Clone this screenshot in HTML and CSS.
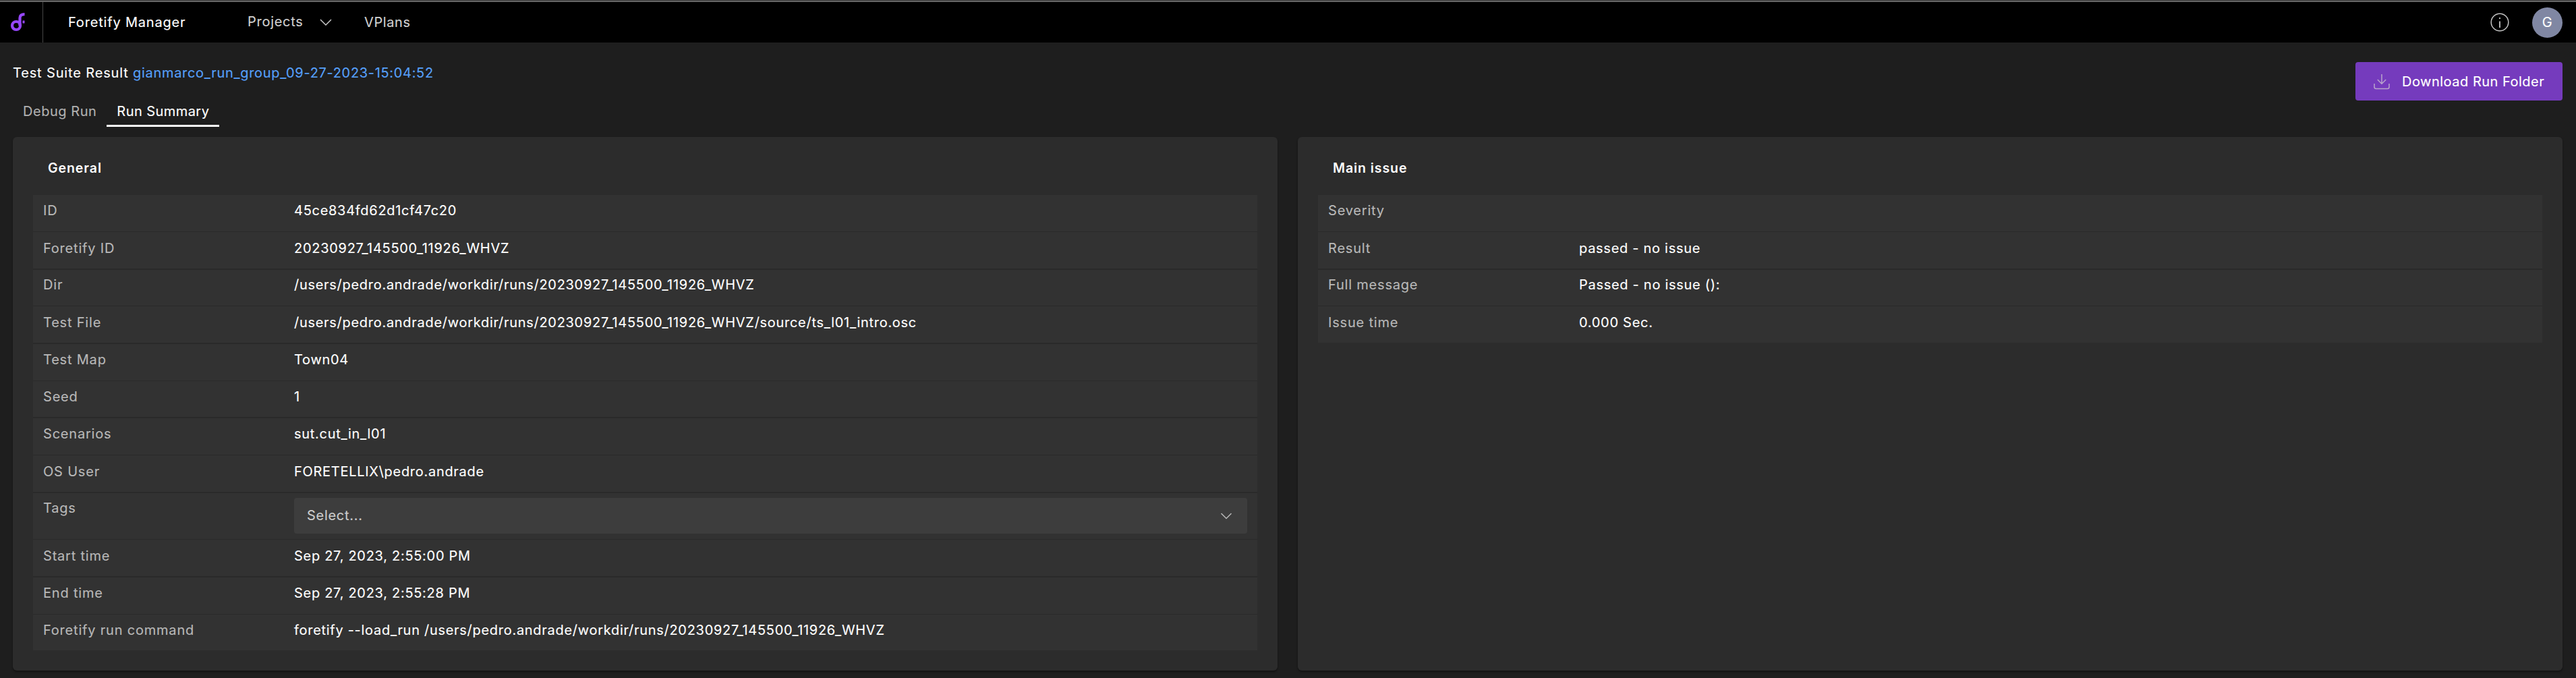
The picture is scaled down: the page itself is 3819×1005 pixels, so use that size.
FILE: index.html
```
<!DOCTYPE html>
<html lang="en">
<head>
<meta charset="utf-8">
<title>Foretify Manager</title>
<link rel="stylesheet" href="styles.css">
</head>
<body>
<header class="topbar">
  <div class="logo">
    <svg width="24" height="30" viewBox="0 0 24 30" fill="none" stroke="#9747ff">
      <circle cx="9" cy="20" r="6" stroke-width="4.2"/>
      <path d="M14.500 20V8.500Q14.500 3.200 21.500 3.200" stroke-width="4.200"/>
      <rect x="18.500" y="12.500" width="3" height="4" fill="#9747ff" stroke="none"/>
    </svg>
  </div>
  <div class="brand">Foretify Manager</div>
  <nav class="nav">
    <a class="nav-projects">Projects</a>
    <svg class="nav-chevron" width="18" height="10" viewBox="0 0 18 10" fill="none" stroke="#c8c8c8" stroke-width="1.500"><path d="M1 1l8 8 8-8"/></svg>
    <a class="nav-vplans">VPlans</a>
  </nav>
  <div class="account">
    <svg width="28" height="28" viewBox="0 0 28 28" fill="none" stroke="#c4c4c4" stroke-width="1.500"><circle cx="14" cy="14" r="12.800"/><path d="M14 12.500V22M14 7v2" stroke-width="1.800"/></svg>
    <div class="avatar">G</div>
  </div>
</header>
<section class="subheader">
  <div>
    <h1 class="title">Test Suite Result <a class="title-link">gianmarco_run_group_09-27-2023-15:04:52</a></h1>
    <div class="tabs">
      <div class="tab">Debug Run</div>
      <div class="tab tab-active">Run Summary</div>
    </div>
  </div>
  <button class="download">
    <svg width="24" height="24" viewBox="0 0 24 24" fill="none" stroke="#b9a6cc" stroke-width="1.500"><path d="M12 1v14M5.800 9l6.200 6.200L18.200 9M1 15v5q0 2.500 2.500 2.500h17q2.500 0 2.500-2.500v-5"/></svg>
    <span>Download Run Folder</span>
  </button>
</section>
<main class="panels">
  <section class="panel">
    <h2 class="panel-title">General</h2>
    <dl class="table">
      <div class="row"><dt>ID</dt><dd>45ce834fd62d1cf47c20</dd></div>
      <div class="row"><dt>Foretify ID</dt><dd>20230927_145500_11926_WHVZ</dd></div>
      <div class="row row-short"><dt>Dir</dt><dd>/users/pedro.andrade/workdir/runs/20230927_145500_11926_WHVZ</dd></div>
      <div class="row"><dt>Test File</dt><dd>/users/pedro.andrade/workdir/runs/20230927_145500_11926_WHVZ/source/ts_l01_intro.osc</dd></div>
      <div class="row"><dt>Test Map</dt><dd>Town04</dd></div>
      <div class="row row-short"><dt>Seed</dt><dd>1</dd></div>
      <div class="row"><dt>Scenarios</dt><dd>sut.cut_in_l01</dd></div>
      <div class="row"><dt>OS User</dt><dd>FORETELLIX\pedro.andrade</dd></div>
      <div class="row row-tags"><dt>Tags</dt><dd><div class="select"><span>Select...</span><svg width="18" height="10" viewBox="0 0 18 10" fill="none" stroke="#b8b8b8" stroke-width="1.500"><path d="M1.500 1l7.500 7.500L16.500 1"/></svg></div></dd></div>
      <div class="row"><dt>Start time</dt><dd>Sep 27, 2023, 2:55:00 PM</dd></div>
      <div class="row"><dt>End time</dt><dd>Sep 27, 2023, 2:55:28 PM</dd></div>
      <div class="row row-short"><dt>Foretify run command</dt><dd>foretify --load_run /users/pedro.andrade/workdir/runs/20230927_145500_11926_WHVZ</dd></div>
    </dl>
  </section>
  <section class="panel">
    <h2 class="panel-title">Main issue</h2>
    <dl class="table">
      <div class="row"><dt>Severity</dt><dd></dd></div>
      <div class="row"><dt>Result</dt><dd>passed - no issue</dd></div>
      <div class="row row-short"><dt>Full message</dt><dd>Passed - no issue ():</dd></div>
      <div class="row"><dt>Issue time</dt><dd>0.000 Sec.</dd></div>
    </dl>
  </section>
</main>
</body>
</html>
```
FILE: styles.css
```
* { box-sizing: border-box; }
body {
  margin: 0;
  height: 1005px;
  display: flex;
  flex-direction: column;
  overflow: hidden;
  background: #1e1e1e;
  color: #fff;
  font: 400 20px/30px Inter, "Liberation Sans", sans-serif;
  letter-spacing: 0.73px;
  white-space: nowrap;
  -webkit-text-stroke: 0.12px currentColor;
}
h1, h2, dl, dd { margin: 0; font-size: inherit; }

.topbar {
  display: flex;
  align-items: center;
  height: 63px;
  background: #000;
  border-top: 1px solid #333;
  box-shadow: inset 0 2px #666;
  padding-right: 20px;
}
.logo {
  align-self: stretch;
  width: 64px;
  border-right: 1px solid #484848;
  margin-top: 2px;
  padding: 15px 0 0 15px;
}
.brand { width: 265px; margin-left: 37px; padding-top: 2px; letter-spacing: 0.82px; }
.nav { display: flex; align-items: center; color: #d0d0d0; padding-top: 2px; }
.nav-projects { width: 108px; padding: 0 0 3px 1px; }
.nav-chevron { margin-right: 48px; }
.nav-vplans { letter-spacing: 0.6px; }
.account { display: flex; align-items: center; gap: 34px; margin-left: auto; padding-top: 2px; }
.avatar {
  width: 45px;
  height: 45px;
  border-radius: 50%;
  background: #8087a3;
  text-align: center;
  line-height: 44px;
}

.subheader {
  display: flex;
  justify-content: space-between;
  align-items: flex-start;
  height: 140px;
  padding: 29px 20px 0 19px;
}
.title { font-weight: 400; letter-spacing: 0.85px; padding-top: 1px; }
.title-link { color: #56a0fb; letter-spacing: 0.68px; }
.tabs { display: flex; margin-top: 25px; }
.tab { height: 40px; padding: 2px 16px 0 15px; color: #b0b0b0; letter-spacing: 0.53px; }
.tab-active { border-bottom: 3px solid #fff; color: #fff; letter-spacing: 0.44px; width: 167px; margin-left: -1px; }
.download {
  display: flex;
  align-items: center;
  width: 307px;
  height: 57px;
  padding: 0 0 0 27px;
  gap: 18px;
  border: 0;
  border-radius: 4px;
  background: #753bbd;
  color: #fff;
  font: inherit;
  letter-spacing: 0.5px;
}
.download svg { margin-top: 1px; }

.panels { display: flex; gap: 30px; height: 791px; padding: 0 20px 0 19px; }
.panel {
  flex: 1;
  padding: 31px 30px 30px;
  border-radius: 6px;
  background: #2c2c2c;
  box-shadow: 0 2px 3px rgba(0, 0, 0, 0.4);
}
.panel-title {
  margin: 0 22px 25px;
  font-size: 19.5px;
  font-weight: 600;
  letter-spacing: 0.93px;
  -webkit-text-stroke: 0;
}
.row {
  display: flex;
  height: 55px;
  padding: 8px 15px 0;
  border-bottom: 1px solid #2a2a2a;
  background: #323232;
}
.row:nth-child(even) { height: 56px; padding-top: 9px; border-bottom-width: 2px; }
.row-short { height: 54px; padding-top: 7px; }
.row.row-short:nth-child(even) { height: 55px; padding-top: 8px; }
.row:last-child { border-bottom-color: #2c2c2c; }
.row-tags { height: 69px; padding-top: 7px; }
.row dt { width: 372px; color: #b8b8b8; letter-spacing: 0.8px; }
.row dd { flex: 1; letter-spacing: 0.71px; }
.select {
  display: flex;
  align-items: center;
  justify-content: space-between;
  height: 53px;
  padding: 0 22px 0 19px;
  border-radius: 4px;
  background: #3d3d3d;
  color: #ccc;
}
.select span { padding-bottom: 1px; }
```
